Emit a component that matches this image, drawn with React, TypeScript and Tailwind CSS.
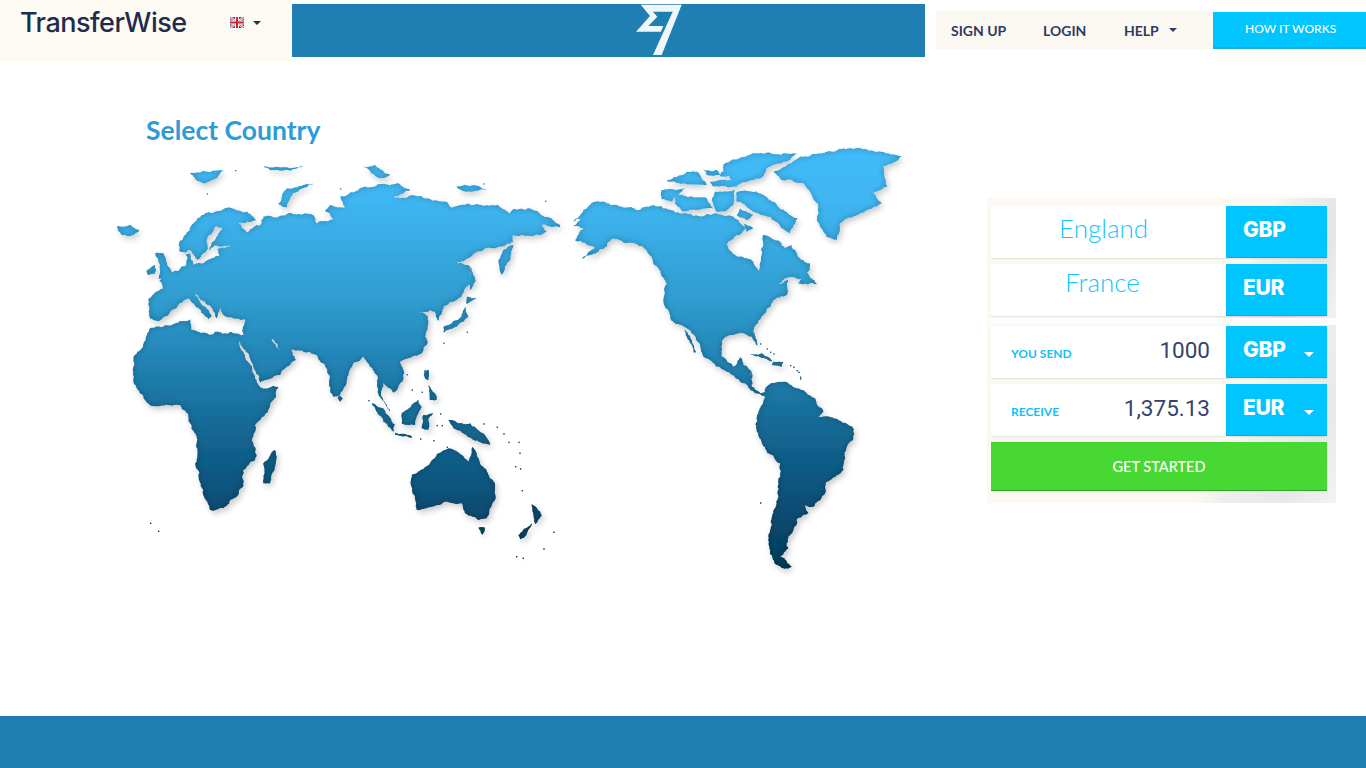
import React from "react";

type P = [number, number];
const z6 = (a: number[]): P[] => pairs(a).map(([x, y]) => [100 + x / 3, 110 + y / 3]);
const z7 = (a: number[]): P[] => pairs(a).map(([x, y]) => [100 + x / 3, 300 + y / 3]);
const z8 = (a: number[]): P[] => pairs(a).map(([x, y]) => [540 + x / 3, 140 + y / 3]);
const z9 = (a: number[]): P[] => pairs(a).map(([x, y]) => [690 + x / 3, 350 + y / 3]);
function pairs(a: number[]): P[] {
  const r: P[] = [];
  for (let i = 0; i < a.length; i += 2) r.push([a[i], a[i + 1]]);
  return r;
}
let seed = 11;
const rnd = () => {
  seed = (seed * 16807) % 2147483647;
  return seed / 2147483647 - 0.5;
};
function split(a: P, b: P, out: P[], rough: number) {
  const dx = b[0] - a[0];
  const dy = b[1] - a[1];
  const len = Math.hypot(dx, dy);
  if (len < 1.5) {
    out.push(a);
    return;
  }
  const d = rnd() * rough * Math.min(len, 9);
  const m: P = [(a[0] + b[0]) / 2 - (dy / len) * d, (a[1] + b[1]) / 2 + (dx / len) * d];
  split(a, m, out, rough);
  split(m, b, out, rough);
}
function coast(pts: P[], r = 0.34): string {
  const out: P[] = [];
  pts.forEach((p, i) => split(p, pts[(i + 1) % pts.length], out, r));
  return out.map((p, i) => (i ? "L" : "M") + p[0].toFixed(1) + " " + p[1].toFixed(1)).join("") + "Z";
}

const eurasiaAfrica: P[] = [
  ...z6([145,570,190,535,178,512,235,482,255,468,258,432,272,430,280,466,320,452,358,436,352,416,392,407,345,406,326,420,346,388,366,352,346,350,322,385,318,425,292,452,265,420,240,425,238,395,270,360,305,315,390,293,440,305,470,332,415,338,440,367,482,345,490,320,520,322,580,312,640,315,650,340,700,327,675,302,690,285,735,292,720,260,780,235,840,222,890,220,930,240,880,265,930,256,985,265,1040,275,1050,290,1120,285,1200,292,1230,312,1240,298,1290,295,1340,322,1380,345,1380,352,1325,345,1340,365,1300,378,1240,375,1240,395,1150,420,1070,460,1110,470,1110,522,1070,570,1030,590,1015,632,1008,610,990,600,958,608]),
  ...z7([985,50,985,70,975,110,982,130,965,160,900,185,910,230,880,278,850,250,845,290,870,335,835,280,830,225,790,170,760,190,720,285,700,290,670,190,630,155,570,150,550,160,515,115,540,150,570,145,587,180,540,225,482,248,450,175,418,122,417,128,445,185,484,264,535,262,510,320,465,375,460,430,466,480,430,510,432,545,410,590,370,625,330,630,310,570,285,490,292,420,265,350,240,315,160,318,120,280,100,240,100,180,150,85,272,58,275,90,330,105,345,95,430,105]),
  ...z6([436,630,375,618,362,594,350,625,338,600,285,552,335,618,325,628,300,598,265,565,215,600,170,632,150,625]),
];

const americas: P[] = [
  ...z8([100,245,130,210,165,185,230,195,300,210,340,195,430,220,475,228,530,220,595,240,615,270,560,312,585,345,640,365,655,392,665,345,670,285,720,305,735,325,755,315,785,360,810,370,800,400,830,432,775,430,790,415,745,412,715,432,745,420,740,465,700,480,675,520,640,570,652,620,635,590,610,580,570,585,545,605,545,650,580,680,600,652,610,675,635,700,635,718]),
  ...z9([180,70,185,110,215,130,225,125,235,105,265,95,325,115,375,145,400,185,385,200,430,205,492,238,490,265,470,290,460,360,410,395,405,430,370,470,345,465,355,490,320,510,320,522,300,555,290,580,295,595,270,620,305,650,280,655,250,630,238,590,250,490,265,420,270,340,235,310,198,235,205,190,225,140,210,132,195,130,165,100,110,65,80,50]),
  ...z8([490,650,478,610,440,565,400,545,375,500,380,430,340,370,310,320,220,295,200,320,125,357,170,320,105,300,130,265,100,260,130,235]),
];

const islands: P[][] = [
  z8([700,95,780,50,930,25,1020,35,1085,50,1030,80,1042,140,1000,160,1025,190,960,220,900,250,890,300,860,290,830,240,835,200,790,130,720,115]),
  z8([550,75,640,40,770,40,750,60,680,85,660,115,595,135,550,95]),
  z8([590,155,650,155,700,185,772,235,750,280,725,265,690,230,640,215,615,195,590,185]),
  z8([365,150,435,145,410,170,395,185,365,178]),
  z8([410,165,500,175,520,205,470,210,430,215,405,190]),
  z8([380,122,470,95,500,135,420,132]),
  z8([490,88,530,90,540,105,500,105]),
  z8([440,95,465,95,470,105,430,105]),
  z8([545,95,570,100,560,110,540,108]),
  z8([510,125,600,118,590,140,520,140]),
  z8([525,155,585,150,580,195,555,215,530,215,515,180]),
  z8([600,205,640,225,620,240,590,225]),
  z8([610,250,640,265,620,275]),
  z8([432,568,440,575,468,636,462,638]),
  z8([630,645,665,640,700,665,660,652]),
  z8([700,665,730,665,725,680,695,675]),
  z8([790,425,800,395,830,432]),
  z6([50,350,90,345,118,360,100,375,65,375]),
  z6([165,430,190,430,215,495,175,505,180,465]),
  z6([140,480,165,465,165,490,145,495]),
  z6([270,190,370,180,350,205,310,220,285,205]),
  z6([490,170,610,168,560,180,510,180]),
  z6([535,282,560,235,640,222,580,250,560,292]),
  z6([790,170,825,165,870,195,840,205]),
  z6([1070,230,1120,225,1160,240,1100,245]),
  z6([1115,470,1127,512,1112,540,1108,500]),
  z6([1240,405,1230,450,1205,495,1195,450,1210,420]),
  z6([1100,560,1130,565,1100,582]),
  z6([1095,590,1105,620,1070,650,1030,668,1030,650,1085,620]),
  z7([525,450,530,475,510,550,490,550,490,490]),
  z7([715,280,728,295,720,305,713,295]),
  z7([955,300,965,320,945,375,905,370,905,340]),
  z7([815,310,850,325,885,375,880,395,850,365]),
  z7([885,398,935,408,935,415,885,405]),
  z7([970,345,1000,340,985,360,985,390,965,385]),
  z7([1045,360,1075,370,1110,370,1150,400,1170,435,1120,420,1090,400,1060,385]),
  z7([935,525,990,490,1015,460,1045,445,1085,465,1105,485,1118,440,1140,490,1185,550,1185,600,1160,655,1135,660,1095,640,1085,610,1040,605,950,630,945,590,932,550]),
  z7([1135,683,1155,683,1148,705]),
  z7([1295,612,1325,645,1305,672,1300,640]),
  z7([1295,670,1280,705,1260,718,1255,705]),
  z7([972,210,987,210,985,240,975,235]),
  z7([985,255,1005,280,1010,300,990,300]),
];

const dots: P[] = [
  ...z7([150,668,174,692,1265,570,1360,695,1330,745,1248,768,1268,773,1225,425,1255,425,1258,458,1245,498,1260,505,1190,380,1210,400,1150,370,1030,128,1100,95,805,300,920,222,935,268,965,275,1020,340,1025,375,1010,375,1040,440,1000,420,960,415]),
  ...z9([210,457,330,80,320,60,300,45,240,5,260,100,290,100]),
  ...z8([660,610,680,625,700,640,760,680,775,695,780,715]),
  ...z6([405,180,320,250,720,235,1150,220,1335,272]),
];

const paths = [eurasiaAfrica, americas].map((p) => coast(p)).concat(islands.map((p) => coast(p, 0.26)));

function WorldMap() {
  return (
    <svg width="810" height="440" viewBox="105 142 810 440" className="block">
      <defs>
        <linearGradient id="land" gradientUnits="userSpaceOnUse" x1="0" y1="150" x2="0" y2="570">
          <stop offset="0" stopColor="#42bbfa" />
          <stop offset="0.12" stopColor="#3fb6f2" />
          <stop offset="0.36" stopColor="#2f9ccf" />
          <stop offset="0.48" stopColor="#2487b9" />
          <stop offset="0.64" stopColor="#166c98" />
          <stop offset="0.83" stopColor="#0a5078" />
          <stop offset="1" stopColor="#033c59" />
        </linearGradient>
        <filter id="relief" filterUnits="userSpaceOnUse" x="100" y="140" width="820" height="445">
          <feGaussianBlur in="SourceAlpha" stdDeviation="3" result="b" />
          <feOffset in="b" dx="2" dy="3" result="o" />
          <feComponentTransfer in="o" result="drop">
            <feFuncA type="linear" slope="0.22" />
          </feComponentTransfer>
          <feComponentTransfer in="SourceAlpha" result="inv">
            <feFuncA type="table" tableValues="1 0" />
          </feComponentTransfer>
          <feGaussianBlur in="inv" stdDeviation="3.5" result="ib" />
          <feComposite in="ib" in2="SourceAlpha" operator="in" result="ic" />
          <feComponentTransfer in="ic" result="inner">
            <feFuncA type="linear" slope="0.5" />
          </feComponentTransfer>
          <feMerge>
            <feMergeNode in="drop" />
            <feMergeNode in="SourceGraphic" />
            <feMergeNode in="inner" />
          </feMerge>
        </filter>
      </defs>
      <g fill="url(#land)" filter="url(#relief)">
        <path d={paths.join("")} />
        {dots.map(([x, y], i) => (
          <rect key={i} x={x} y={y} width="1.3" height="1.3" />
        ))}
      </g>
    </svg>
  );
}

function Flag() {
  return (
    <svg width="14" height="11" viewBox="0 0 14 11" className="block">
      <rect width="14" height="11" fill="#3b4a8c" />
      <path d="M0 0L14 11M14 0L0 11" stroke="#f3f3f3" strokeWidth="2.4" />
      <path d="M0 0L14 11M14 0L0 11" stroke="#d0313f" strokeWidth="0.8" />
      <path d="M7 0V11M0 5.5H14" stroke="#f3f3f3" strokeWidth="4" />
      <path d="M7 0V11M0 5.5H14" stroke="#d8202f" strokeWidth="2" />
    </svg>
  );
}

const Caret = ({ cls }: { cls: string }) => <span className={"block w-0 h-0 border-x-[4px] border-x-transparent border-t-[4px] " + cls} />;

function CountryRow({ name, code, nameCls }: { name: string; code: string; nameCls: string }) {
  return (
    <div className="flex h-[52px] bg-white shadow-[0_1px_1px_rgba(0,0,0,0.08)]">
      <div className={"w-[235px] text-[26px] leading-none font-light text-[#14c5fb] " + nameCls}>{name}</div>
      <div className="w-[101px] bg-[#00c5ff] border-b border-[#14a8dc] pl-[17px] pt-[11px] text-[21px] leading-[26px] font-extrabold text-white font-['Inter',sans-serif] tracking-[-0.3px]">{code}</div>
    </div>
  );
}

function AmountRow({ label, value, code }: { label: string; value: string; code: string }) {
  return (
    <div className="flex h-[52px] bg-white shadow-[0_1px_1px_rgba(0,0,0,0.08)]">
      <div className="w-[235px] flex items-center justify-between pl-5 pr-4">
        <span className="text-[12px] font-bold text-[#14c0f5] pt-[3px]">{label}</span>
        <span className="text-[22.5px] text-[#35436a] font-['Roboto',sans-serif] pb-[3px]">{value}</span>
      </div>
      <div className="w-[101px] bg-[#00c5ff] border-b border-[#14a8dc] flex items-center justify-between pl-[17px] pr-[13px] pb-[3px] text-[21px] font-extrabold text-white font-['Inter',sans-serif] tracking-[-0.3px]">
        {code}
        <span className="block w-0 h-0 mt-[9px] border-x-[5px] border-x-transparent border-t-[5px] border-t-white" />
      </div>
    </div>
  );
}

export default function App() {
  return (
    <div className="w-[1366px] h-[768px] overflow-hidden flex flex-col bg-white font-['Lato',sans-serif]">
      <header className="flex h-[61px] shrink-0 items-start">
        <div className="w-[292px] h-[61px] bg-[#fcfaf2] flex items-start pl-5 pt-[5px]">
          <span className="w-[210px] text-[27px] leading-[36px] font-medium tracking-[-0.5px] text-[#1f2c4c] font-['Inter',sans-serif]">TransferWise</span>
          <div className="flex items-center gap-[9px] pt-3">
            <Flag />
            <Caret cls="border-t-[#2a2f3f]" />
          </div>
        </div>
        <div className="mt-1 h-[53px] w-[633px] bg-[#1f7fb2] pl-[344px]">
          <svg width="46" height="52" viewBox="0 0 46 52" className="block">
            <path fill="#f0f7fb" d="M4.7 .7H45.7L25.7 51H17L36.7 7.7H17L21.3 12.7L12.3 22H27.3L25 27.7H0L14 12Z" />
          </svg>
        </div>
        <div className="ml-[11px] mt-[11px] h-[38px] w-[277px] bg-[#faf8f1] flex items-center pl-[15px] text-[14px] font-bold text-[#2f3c5e]">
          <span className="w-[92px]">SIGN UP</span>
          <span className="w-[81px]">LOGIN</span>
          <span className="w-[45px]">HELP</span>
          <Caret cls="border-t-[#2f3c5e]" />
        </div>
        <div className="mt-3 h-[37px] w-[153px] bg-[#00c5ff] border-b-2 border-[#14aee0] pl-8 text-[12px] leading-[34px] font-medium text-white">HOW IT WORKS</div>
      </header>

      <main className="h-[655px] flex">
        <div className="w-[987px] pl-[105px]">
          <h1 className="pl-[41px] pt-[52px] h-[81px] text-[26.5px] leading-[34px] font-bold text-[#2f9bd6]">Select Country</h1>
          <WorldMap />
        </div>
        <div className="mt-[137px] w-[349px] h-[305px] bg-[#fdfcf8]">
          <div className="h-[120px] pt-2 pl-1 pr-[9px] flex flex-col gap-1.5 bg-[linear-gradient(118deg,#fbf9f1_0%,#fbf9f1_70%,#efeeec_76%,#e4e4e4_88%,#f2f2ef_100%)]">
            <CountryRow name="England" code="GBP" nameCls="pl-[68px] pt-[9px]" />
            <CountryRow name="France" code="EUR" nameCls="pl-[74px] pt-[5px]" />
          </div>
          <div className="mt-[7px] h-[178px] pt-px pl-1 pr-[9px] flex flex-col gap-1.5 bg-[linear-gradient(118deg,#fbf9f1_0%,#fbf9f1_68%,#efefed_74%,#e8e8e8_88%,#f3f3f1_100%)]">
            <AmountRow label="YOU SEND" value="1000" code="GBP" />
            <AmountRow label="RECEIVE" value="1,375.13" code="EUR" />
            <button className="h-[49px] pt-[2px] bg-[#48d834] border-b border-[#2fa826] text-[14.5px] font-medium text-white">GET STARTED</button>
          </div>
        </div>
      </main>

      <footer className="h-[52px] shrink-0 bg-[#1f7fb2]" />
    </div>
  );
}
